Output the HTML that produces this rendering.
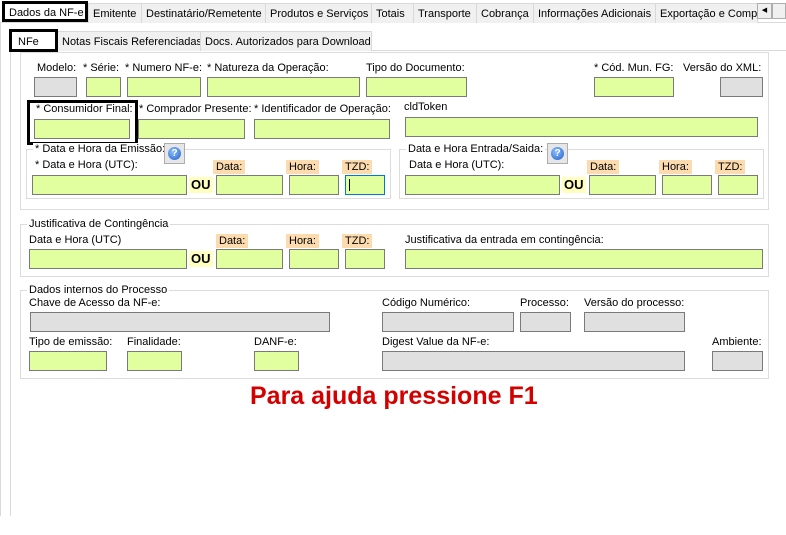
<!DOCTYPE html>
<html><head><meta charset="utf-8"><style>
*{box-sizing:border-box;margin:0;padding:0}
body{width:786px;height:535px;background:#fff;position:relative;overflow:hidden;font-family:"Liberation Sans",Arial,sans-serif;font-size:11px;color:#000}
div,span{position:absolute}
.t{white-space:nowrap;line-height:14px}
.tab{top:3px;height:20px;background:#f0f0f0;border:1px solid #d9d9d9;border-bottom:none;padding:4px 0 0 4px;white-space:nowrap;overflow:hidden}
.itab{top:31px;height:20px;background:#f0f0f0;border:1px solid #d9d9d9;border-bottom:none;padding:4px 0 0 4px;white-space:nowrap}
.i{height:20px;background:#e2ffa0;border:1px solid #7a7a7a}
.g{height:20px;background:#e0e0e0;border:1px solid #7a7a7a}
.o{background:#fcdcae;padding:0 3px;line-height:14px;white-space:nowrap}
.ou{background:#ffffc0;font-weight:bold;font-size:13px;line-height:16px;padding:0 2px}
.fr{border:1px solid #dcdcdc}
.lg{background:#fff;padding:0 2px;white-space:nowrap;line-height:13px}
.hb{width:21px;height:21px;background:#e6e6e6;border:1px solid #adadad}
.hb::after{content:"?";position:absolute;left:3px;top:3px;width:13px;height:13px;border-radius:50%;background:radial-gradient(circle at 40% 35%,#8fc0ff,#1e5fc8);color:#fff;font-weight:bold;font-size:10px;line-height:13px;text-align:center}
</style></head><body>
<div style="left:0;top:22px;width:786px;height:1px;background:#d9d9d9"></div>
<div style="left:0;top:22px;width:1px;height:494px;background:#d9d9d9"></div>
<div class="tab" style="left:88px;width:54px">Emitente</div>
<div class="tab" style="left:141px;width:125px">Destinatário/Remetente</div>
<div class="tab" style="left:265px;width:107px">Produtos e Serviços</div>
<div class="tab" style="left:371px;width:43px">Totais</div>
<div class="tab" style="left:413px;width:64px">Transporte</div>
<div class="tab" style="left:476px;width:58px">Cobrança</div>
<div class="tab" style="left:533px;width:123px">Informações Adicionais</div>
<div class="tab" style="left:655px;width:103px">Exportação e Compras</div>
<div style="left:757px;top:3px;width:15px;height:16px;background:#f0f0f0;border:1px solid #adadad;font-size:7px;text-align:center;line-height:14px">◀</div>
<div style="left:772px;top:3px;width:14px;height:16px;background:#f0f0f0;border:1px solid #adadad"></div>
<div style="left:2px;top:1px;width:86px;height:21px;background:#fff;border:3px solid #000;padding:2px 0 0 4px" class="t">Dados da NF-e</div>
<div style="left:10px;top:50px;width:776px;height:1px;background:#d9d9d9"></div>
<div style="left:10px;top:50px;width:1px;height:466px;background:#d9d9d9"></div>
<div class="itab" style="left:57px;width:144px">Notas Fiscais Referenciadas</div>
<div class="itab" style="left:200px;width:172px">Docs. Autorizados para Download</div>
<div style="left:9px;top:29px;width:49px;height:23px;background:#fff;border:3px solid #000;padding:3px 0 0 6px" class="t">NFe</div>

<div class="fr" style="left:20px;top:52px;width:749px;height:158px"></div>
<div class="t" style="left:37px;top:61px">Modelo:</div>
<div class="t" style="left:83px;top:61px">* Série:</div>
<div class="t" style="left:125px;top:61px">* Numero NF-e:</div>
<div class="t" style="left:207px;top:61px">* Natureza da Operação:</div>
<div class="t" style="left:366px;top:61px">Tipo do Documento:</div>
<div class="t" style="left:594px;top:61px">* Cód. Mun. FG:</div>
<div class="t" style="left:683px;top:61px">Versão do XML:</div>
<div class="g" style="left:34px;top:77px;width:43px"></div>
<div class="i" style="left:86px;top:77px;width:35px"></div>
<div class="i" style="left:127px;top:77px;width:74px"></div>
<div class="i" style="left:207px;top:77px;width:153px"></div>
<div class="i" style="left:366px;top:77px;width:101px"></div>
<div class="i" style="left:594px;top:77px;width:80px"></div>
<div class="g" style="left:720px;top:77px;width:43px"></div>

<div class="t" style="left:36px;top:102px">* Consumidor Final:</div>
<div class="t" style="left:139px;top:102px">* Comprador Presente:</div>
<div class="t" style="left:254px;top:102px">* Identificador de Operação:</div>
<div class="t" style="left:404px;top:100px">cldToken</div>
<div class="i" style="left:34px;top:119px;width:96px"></div>
<div class="i" style="left:138px;top:119px;width:107px"></div>
<div class="i" style="left:254px;top:119px;width:136px"></div>
<div class="i" style="left:405px;top:117px;width:353px"></div>
<div style="left:27px;top:100px;width:111px;height:45px;border:3px solid #000"></div>

<div class="fr" style="left:26px;top:149px;width:365px;height:50px"></div>
<div class="lg" style="left:33px;top:143px">* Data e Hora da Emissão:</div>
<div class="hb" style="left:164px;top:143px"></div>
<div class="t" style="left:35px;top:158px">* Data e Hora (UTC):</div>
<div class="o" style="left:213px;top:160px">Data:</div>
<div class="o" style="left:286px;top:160px">Hora:</div>
<div class="o" style="left:342px;top:160px">TZD:</div>
<div class="i" style="left:32px;top:175px;width:155px"></div>
<div class="ou" style="left:189px;top:177px">OU</div>
<div class="i" style="left:216px;top:175px;width:67px"></div>
<div class="i" style="left:289px;top:175px;width:50px"></div>
<div class="i" style="left:345px;top:175px;width:40px;border-color:#0078d7"><span style="left:3px;top:3px;width:1px;height:12px;background:#000"></span></div>

<div class="fr" style="left:399px;top:149px;width:365px;height:50px"></div>
<div class="lg" style="left:406px;top:143px">Data e Hora Entrada/Saida:</div>
<div class="hb" style="left:547px;top:143px"></div>
<div class="t" style="left:409px;top:158px">Data e Hora (UTC):</div>
<div class="o" style="left:587px;top:160px">Data:</div>
<div class="o" style="left:659px;top:160px">Hora:</div>
<div class="o" style="left:715px;top:160px">TZD:</div>
<div class="i" style="left:405px;top:175px;width:155px"></div>
<div class="ou" style="left:562px;top:177px">OU</div>
<div class="i" style="left:589px;top:175px;width:67px"></div>
<div class="i" style="left:662px;top:175px;width:50px"></div>
<div class="i" style="left:718px;top:175px;width:40px"></div>

<div class="fr" style="left:20px;top:224px;width:749px;height:53px"></div>
<div class="lg" style="left:27px;top:218px">Justificativa de Contingência</div>
<div class="t" style="left:29px;top:233px">Data e Hora (UTC)</div>
<div class="o" style="left:216px;top:234px">Data:</div>
<div class="o" style="left:286px;top:234px">Hora:</div>
<div class="o" style="left:342px;top:234px">TZD:</div>
<div class="t" style="left:405px;top:233px">Justificativa da entrada em contingência:</div>
<div class="i" style="left:29px;top:249px;width:158px"></div>
<div class="ou" style="left:189px;top:251px">OU</div>
<div class="i" style="left:216px;top:249px;width:67px"></div>
<div class="i" style="left:289px;top:249px;width:50px"></div>
<div class="i" style="left:345px;top:249px;width:40px"></div>
<div class="i" style="left:405px;top:249px;width:358px"></div>

<div class="fr" style="left:20px;top:290px;width:749px;height:89px"></div>
<div class="lg" style="left:27px;top:284px">Dados internos do Processo</div>
<div class="t" style="left:29px;top:296px">Chave de Acesso da NF-e:</div>
<div class="t" style="left:382px;top:296px">Código Numérico:</div>
<div class="t" style="left:520px;top:296px">Processo:</div>
<div class="t" style="left:584px;top:296px">Versão do processo:</div>
<div class="g" style="left:30px;top:312px;width:300px"></div>
<div class="g" style="left:382px;top:312px;width:132px"></div>
<div class="g" style="left:520px;top:312px;width:51px"></div>
<div class="g" style="left:584px;top:312px;width:101px"></div>
<div class="t" style="left:29px;top:335px">Tipo de emissão:</div>
<div class="t" style="left:127px;top:335px">Finalidade:</div>
<div class="t" style="left:254px;top:335px">DANF-e:</div>
<div class="t" style="left:382px;top:335px">Digest Value da NF-e:</div>
<div class="t" style="left:712px;top:335px">Ambiente:</div>
<div class="i" style="left:29px;top:351px;width:78px"></div>
<div class="i" style="left:127px;top:351px;width:55px"></div>
<div class="i" style="left:254px;top:351px;width:45px"></div>
<div class="g" style="left:382px;top:351px;width:303px"></div>
<div class="g" style="left:712px;top:351px;width:51px"></div>

<div style="left:250px;top:382px;width:285px;text-align:center;color:#d40000;font-weight:bold;font-size:25px;line-height:28px;white-space:nowrap">Para ajuda pressione F1</div>
</body></html>
